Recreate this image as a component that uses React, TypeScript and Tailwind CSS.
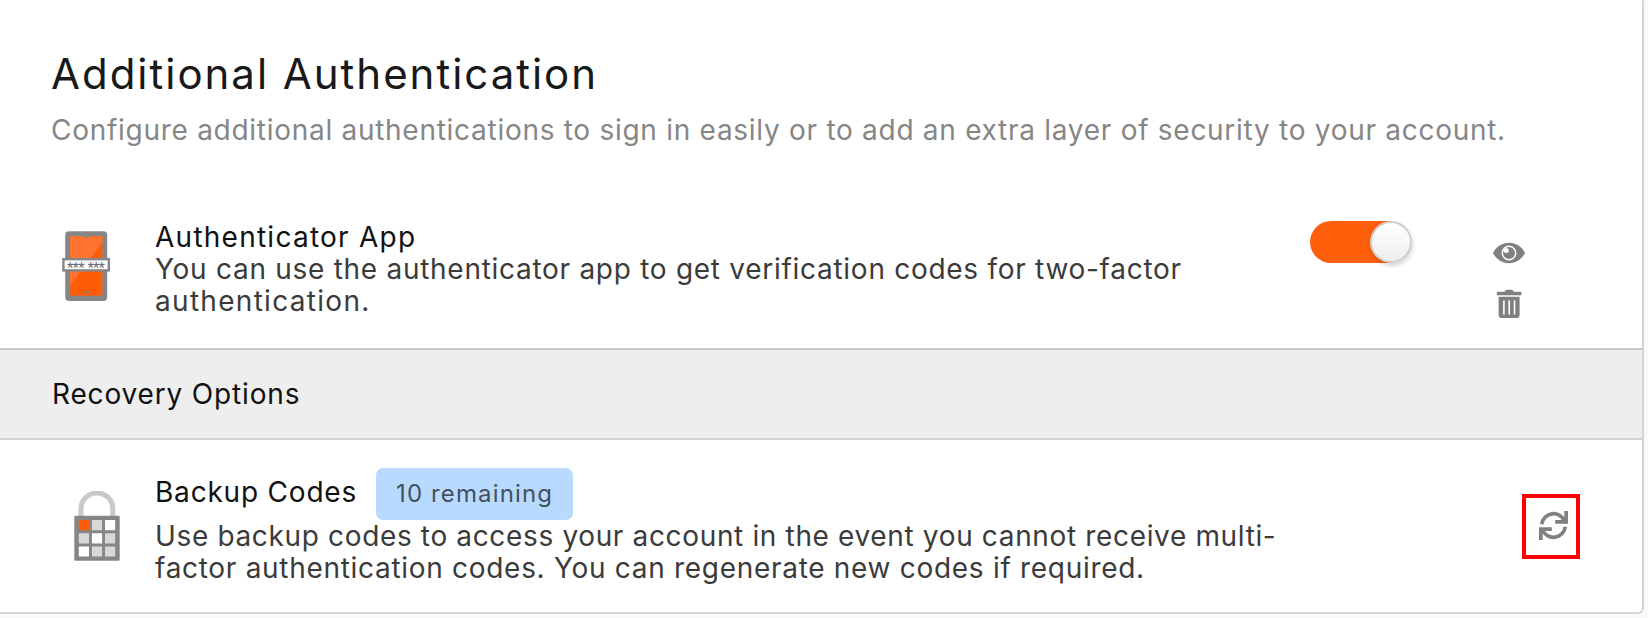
function PhoneIcon() {
  return (
    <svg viewBox="0 0 48 70" className="h-[70px] w-12 shrink-0">
      <rect x="3.2" y="0.3" width="42" height="69.6" rx="4" fill="#868686" />
      <rect x="8.2" y="5.3" width="32.2" height="59.4" fill="#ff5c08" />
      <path d="M8.2 5.3h32.2v6L8.2 54z" fill="#ff7430" />
      <path d="M20 5.2h8.2a4.2 2.2 0 0 1-8.2 0z" fill="#868686" />
      <rect x="20.8" y="60.2" width="6.8" height="2" rx="1" fill="#a8714f" />
      <rect x="1.4" y="28.2" width="45.4" height="11.2" fill="#fff" stroke="#868686" strokeWidth="2.4" />
      <text x="24" y="43.2" textAnchor="middle" textLength="38" fontSize="16.5" fill="#666" className="font-['Liberation_Sans',sans-serif]">*** ***</text>
    </svg>
  );
}

const cells = ['#ff5c08', '#d8d8d8', '#fff', '#d8d8d8', '#fff', '#d8d8d8', '#fff', '#d8d8d8', '#d8d8d8'];

function LockIcon() {
  return (
    <svg viewBox="0 0 46 70" className="h-[70px] w-[46px] shrink-0">
      <path d="M7 26V17.8a15.9 15.9 0 0 1 31.8 0V26" fill="none" stroke="#c9c9c9" strokeWidth="5" />
      <rect x="0.3" y="24.8" width="45.4" height="45" rx="1.2" fill="#868686" />
      {cells.map((fill, i) => (
        <rect key={i} x={4.8 + (i % 3) * 13.1} y={29 + Math.floor(i / 3) * 13.2} width="10.2" height="10.2" rx="0.5" fill={fill} />
      ))}
    </svg>
  );
}

function EyeIcon() {
  return (
    <svg viewBox="0 0 32 22" className="h-[22px] w-8">
      <path d="M0 11C3 5 9 .8 16 .8S29 5 32 11C29 17 23 21.2 16 21.2S3 17 0 11z" fill="#808080" />
      <circle cx="16" cy="11" r="6.7" fill="#808080" stroke="#fff" strokeWidth="1.5" />
      <circle cx="13.3" cy="8.4" r="2.5" fill="#fff" />
    </svg>
  );
}

function TrashIcon() {
  return (
    <svg viewBox="0 0 26 30" className="h-[30px] w-[26px]">
      <path d="M1.8 2.8H8.5L9.5 1.4Q10 .8 10.8.8H15.6Q16.4.8 16.9 1.4L17.9 2.8H24.6Q25.4 2.8 25.4 3.6V6.2H.8V3.6Q.8 2.8 1.8 2.8z" fill="#808080" />
      <path d="M2.6 7.8H23.6V26.6a2.4 2.4 0 0 1-2.4 2.4H5a2.4 2.4 0 0 1-2.4-2.4z" fill="#808080" />
      <path d="M7.9 11.6V25.4M13.2 11.6V25.4M18.5 11.6V25.4" stroke="#fff" strokeWidth="1.6" />
    </svg>
  );
}

function RefreshIcon() {
  return (
    <svg viewBox="0 0 86 86" className="h-[29px] w-[29px]" fill="none" stroke="#808080" strokeWidth="11">
      <path d="M8 39A35.5 35.5 0 0 1 76 30" />
      <path d="M48 32H80.5V0" />
      <path d="M78 47A35.5 35.5 0 0 1 10 56" />
      <path d="M38 54H5.5V86" />
    </svg>
  );
}

export default function App() {
  return (
    <div className="h-[618px] w-[1648px] overflow-hidden bg-[#fafafa] font-[Inter,sans-serif] text-[28px] leading-8 whitespace-nowrap text-[#3b3b3b]">
      <main className="flex h-[614px] w-[1644px] flex-col rounded-tr-[2px] rounded-br-md border-r-2 border-b-2 border-[#d0d5da] bg-white">
        <header className="h-[221px] shrink-0 pt-[50px] pl-[51px]">
          <h1 className="text-[42px] leading-12 tracking-[1.98px] text-[#191919]">Additional Authentication</h1>
          <p className="mt-4 tracking-[0.72px] text-[#868686]">
            Configure additional authentications to sign in easily or to add an extra layer of security to your account.
          </p>
        </header>
        <section className="flex h-[127px] shrink-0 items-start pl-[62px]">
          <div className="mt-2.5 w-[93px]"><PhoneIcon /></div>
          <div className="w-[1155px]">
            <h2 className="tracking-[1.25px] text-[#111]">Authenticator App</h2>
            <p className="tracking-[0.72px]">You can use the authenticator app to get verification codes for two-factor</p>
            <p className="tracking-[1.3px]">authentication.</p>
          </div>
          <button role="switch" aria-checked="true" className="flex h-[42px] w-[102px]">
            <span className="h-[42px] w-[81px] rounded-l-full bg-[#ff5f0a]" />
            <span className="-ml-[21px] size-[42px] rounded-full border-2 border-[#cecece] bg-linear-to-b from-white to-[#eeeeee] shadow-[1px_3px_4px_rgba(0,0,0,0.16)]" />
          </button>
          <div className="mt-[21px] ml-[81px] flex flex-col items-center gap-[25px]">
            <EyeIcon />
            <TrashIcon />
          </div>
        </section>
        <section className="flex h-[92px] shrink-0 items-center border-t-2 border-b-2 border-t-[#c8c8c8] border-b-[#d3d3d3] bg-[#eeeeee] pl-[52px]">
          <h2 className="tracking-[0.84px] text-[#111]">Recovery Options</h2>
        </section>
        <section className="flex items-start pt-7 pl-[74px]">
          <div className="mt-[23px] w-[81px]"><LockIcon /></div>
          <div className="w-[1367px]">
            <div className="flex h-[52px] items-center">
              <h2 className="w-[221px] pb-1 tracking-[0.8px] text-[#111]">Backup Codes</h2>
              <span className="flex h-[52px] w-[197px] items-center rounded-[7px] bg-[#b8daff] pl-5 text-2xl tracking-[1.13px] text-[#44515d]">10 remaining</span>
            </div>
            <p className="tracking-[0.65px]">Use backup codes to access your account in the event you cannot receive multi-</p>
            <p className="tracking-[0.7px]">factor authentication codes. You can regenerate new codes if required.</p>
          </div>
          <button className="mt-[26px] flex h-[65px] w-[58px] items-center justify-center border-4 border-[#ff0000] pb-[2px] pl-1"><RefreshIcon /></button>
        </section>
      </main>
    </div>
  );
}
